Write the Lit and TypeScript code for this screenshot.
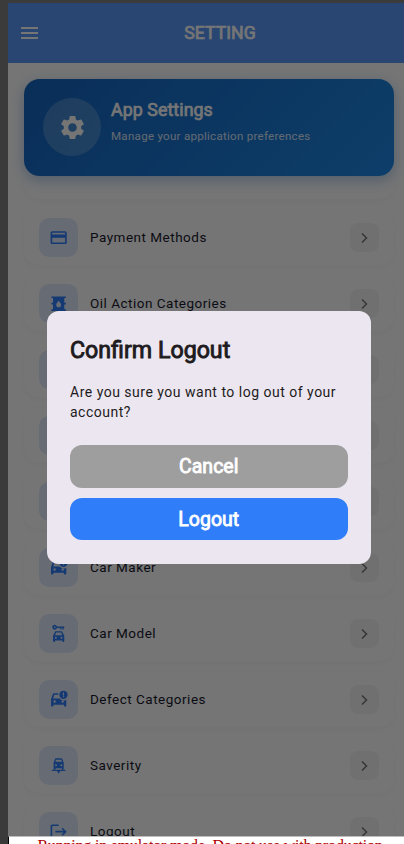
import { LitElement, html, css, svg } from "lit";
import { customElement } from "lit/decorators.js";

const icons: Record<string, unknown> = {
  card: svg`<path d="M20 4H4c-1.110 0-1.990.89-1.990 2L2 18c0 1.110.89 2 2 2h16c1.110 0 2-.89 2-2V6c0-1.110-.89-2-2-2zm0 14H4v-6h16v6zm0-10H4V6h16v2z"/>`,
  oil: svg`<path fill-rule="evenodd" d="M3 3h18v2h-2v6h2v2h-2v6h2v2H3v-2h2v-6H3v-2h2V5H3zM12 16.500c1.700 0 3-1.300 3-2.950C15 12 14.200 11 12 8.300 9.800 11 9 12 9 13.550c0 1.650 1.300 2.950 3 2.950z"/>`,
  alert: svg`<path fill-rule="evenodd" d="M11.500 4H6.200c-.7 0-1.200.4-1.400 1L2.500 11.500V19.500c0 .6.400 1 1 1h1c.6 0 1-.4 1-1V18.500h13v1c0 .6.400 1 1 1h1c.6 0 1-.4 1-1V12.100A6.500 6.500 0 0 1 13.200 10.500H5.300L6.600 6h4.900zM7 12.800a1.500 1.500 0 1 0 0 3 1.500 1.500 0 0 0 0-3zm10 0a1.500 1.500 0 1 0 0 3 1.500 1.500 0 0 0 0-3z"/><path fill-rule="evenodd" d="M18 .8a5.200 5.200 0 1 0 0 10.400A5.200 5.200 0 0 0 18 .8zM17.300 3h1.400v3.800h-1.400zm0 4.800h1.400v1.300h-1.400z"/>`,
  rental: svg`<path fill-rule="evenodd" d="M9.900 3A3 3 0 1 0 9.900 5H14v1.700h1.600V5h1v1.700h1.700V5H19V3zM7.200 3a1 1 0 1 1 0 2 1 1 0 0 1 0-2zM16.600 9.800c-.1-.5-.6-.8-1.100-.8h-7c-.5 0-1 .3-1.100.8L5 14.500v7c0 .5.400 1 1 1h.5c.6 0 1-.4 1-1v-1h9v1c0 .6.400 1 1 1h.5c.6 0 1-.4 1-1v-7zM8.800 10.500h6.400l1.100 3.500H7.700zM8.500 16a1.200 1.200 0 1 1 0 2.400 1.200 1.200 0 0 1 0-2.400zm7 0a1.200 1.200 0 1 1 0 2.400 1.200 1.200 0 0 1 0-2.400z"/>`,
  repair: svg`<path fill-rule="evenodd" d="M16.400 3.500c-.2-.5-.6-.8-1.200-.8H8.800c-.6 0-1 .3-1.200.8L5.700 8.200V16c0 .4.300.7.700.7h1.200c.4 0 .7-.3.7-.7v-.8h7.400v.8c0 .4.300.7.7.7h1.200c.4 0 .7-.3.7-.7V8.200zM8.800 4.800h6.400l.9 2.400H7.900zM8.700 10.200a1.200 1.200 0 1 1 0 2.400 1.200 1.200 0 0 1 0-2.400zm6.600 0a1.200 1.200 0 1 1 0 2.400 1.200 1.200 0 0 1 0-2.400zM3.600 17h16.800v1.700h-6.500L12 22l-1.900-3.300H3.600z"/>`,
  exit: svg`<path d="m17 7-1.410 1.410L18.170 11H8v2h10.170l-2.580 2.580L17 17l5-5zM2 5c0-1.100.9-2 2-2h8v2H4v14h8v2H4c-1.100 0-2-.9-2-2z"/>`,
};

const entries: { icon: string; label: string }[] = [
  { icon: "card", label: "Payment Methods" },
  { icon: "oil", label: "Oil Action Categories" },
  { icon: "", label: "" },
  { icon: "", label: "" },
  { icon: "", label: "" },
  { icon: "alert", label: "Car Maker" },
  { icon: "rental", label: "Car Model" },
  { icon: "alert", label: "Defect Categories" },
  { icon: "repair", label: "Saverity" },
  { icon: "exit", label: "Logout" },
];

@customElement("settings-row")
export class SettingsRow extends LitElement {
  static properties = { icon: {}, label: {} };
  declare icon: string;
  declare label: string;

  static styles = css`
    :host {
      display: flex;
      align-items: center;
      box-sizing: border-box;
      flex: none;
      height: 55px;
      padding: 0 15.500px;
      border-radius: 15px;
      background: #fff;
      box-shadow: 0 2px 8px rgba(0, 0, 0, 0.035);
    }
    .tile {
      display: grid;
      place-items: center;
      width: 39px;
      height: 39px;
      margin-right: 12px;
      border-radius: 10px;
      background: #e0e9fa;
    }
    .tile svg {
      width: 19.300px;
      height: 19.300px;
      fill: #2f7df8;
    }
    .label {
      flex: 1;
      padding-bottom: 2px;
      font-size: 13.500px;
      letter-spacing: 0.5px;
      color: #1a1a2e;
      white-space: nowrap;
    }
    .arrow {
      display: grid;
      place-items: center;
      width: 29px;
      height: 29px;
      border-radius: 8px;
      background: #f5f5f5;
    }
    .arrow svg {
      width: 14px;
      height: 14px;
      fill: none;
      stroke: #757575;
      stroke-width: 1.500;
    }
  `;

  render() {
    return html`
      <div class="tile"><svg viewBox="0 0 24 24">${icons[this.icon] ?? ""}</svg></div>
      <span class="label">${this.label}</span>
      <div class="arrow"><svg viewBox="0 0 14 14"><path d="M5 2.500 9.500 7 5 11.500" /></svg></div>
    `;
  }
}

@customElement("app-root")
export class AppRoot extends LitElement {
  static styles = css`
    :host {
      position: relative;
      display: flex;
      flex-direction: column;
      box-sizing: border-box;
      width: 404px;
      height: 844px;
      overflow: hidden;
      background: #3a3a3a;
      font-family: Roboto, "Liberation Sans", sans-serif;
    }
    .screen {
      display: flex;
      flex-direction: column;
      height: 836px;
      flex: none;
      box-sizing: border-box;
      border-top: 3px solid #808080;
      border-left: 8px solid #808080;
      background: #fff;
      overflow: hidden;
    }
    .bar {
      display: grid;
      grid-template-columns: 60px 1fr 32px;
      align-items: center;
      flex: none;
      height: 60px;
      background: #5a99fa;
      color: #fff;
    }
    .menu {
      display: grid;
      gap: 3px;
      width: 17.500px;
      margin-left: 12.500px;
    }
    .menu i {
      height: 2px;
      background: #fff;
    }
    .title {
      text-align: center;
      font-size: 17.700px;
      -webkit-text-stroke: 0.7px currentColor;
    }
    .hero {
      display: flex;
      align-items: center;
      flex: none;
      box-sizing: border-box;
      height: 96.500px;
      margin: 16px 10px 0 15.500px;
      padding: 0 19px 0 19.500px;
      border-radius: 15.500px;
      color: #fff;
      background: linear-gradient(135deg, #1565c0, #1e88e5);
      box-shadow: 0 4px 14px rgba(21, 101, 192, 0.35);
      z-index: 1;
    }
    .round {
      display: grid;
      place-items: center;
      width: 58px;
      height: 58px;
      margin-right: 10px;
      border-radius: 50%;
      background: rgba(255, 255, 255, 0.2);
    }
    .round svg {
      width: 29px;
      height: 29px;
      fill: #fff;
    }
    .hero b {
      display: block;
      font-size: 17.800px;
      font-weight: 400;
      -webkit-text-stroke: 0.7px currentColor;
      line-height: 22px;
      letter-spacing: 0.08px;
    }
    .hero small {
      display: block;
      font-size: 11.600px;
      line-height: 16px;
      margin-top: 7px;
      letter-spacing: 0.25px;
      color: rgba(255, 255, 255, 0.85);
    }
    .copy {
      padding-bottom: 11px;
    }
    .list {
      display: flex;
      flex-direction: column;
      gap: 11px;
      flex: 1;
      min-height: 0;
      padding: 0 10px 0 15.500px;
      overflow: hidden;
    }
    .stub {
      flex: none;
      height: 23.500px;
      border-radius: 0 0 15px 15px;
      box-shadow: 0 2px 8px rgba(0, 0, 0, 0.035);
    }
    .shade {
      position: absolute;
      inset: 0 0 8px;
      display: grid;
      background: rgba(0, 0, 0, 0.54);
      z-index: 2;
    }
    .dialog {
      box-sizing: border-box;
      width: 324px;
      height: 252.500px;
      margin: 311px 0 0 47px;
      padding: 25px 23.500px 0 23px;
      border-radius: 12px;
      background: #ece6f0;
      color: #1d1b20;
    }
    h2 {
      margin: 0;
      font-size: 23.200px;
      font-weight: 400;
      -webkit-text-stroke: 0.9px currentColor;
      line-height: 28px;
      white-space: nowrap;
    }
    p {
      margin: 18px 0 23px;
      font-size: 14px;
      line-height: 20px;
      letter-spacing: 0.5px;
    }
    button {
      display: block;
      width: 100%;
      height: 42.500px;
      margin: 0 0 10px;
      padding: 1px 0 0;
      border: 0;
      border-radius: 12px;
      background: #9e9e9e;
      color: #fff;
      font: 400 19.500px Roboto, sans-serif;
      -webkit-text-stroke: 0.8px currentColor;
    }
    .primary {
      background: #2f7df8;
    }
    .notice {
      box-sizing: border-box;
      flex: none;
      height: 24px;
      margin-left: 8px;
      padding-left: 7px;
      border-top: 1px solid #bdbdbd;
      border-left: 1px solid #000;
      background: #fff;
      color: #b00000;
      font: 16px/17px "Liberation Serif", serif;
      letter-spacing: -0.19px;
      text-align: center;
      white-space: nowrap;
    }
  `;

  render() {
    return html`
      <div class="screen">
        <header class="bar">
          <div class="menu"><i></i><i></i><i></i></div>
          <div class="title">SETTING</div>
        </header>
        <section class="hero">
          <div class="round">
            <svg viewBox="0 0 24 24"><path d="M19.140 12.940c.04-.3.060-.61.060-.94 0-.32-.02-.64-.07-.94l2.030-1.580c.18-.14.23-.41.12-.61l-1.920-3.320c-.12-.22-.37-.29-.59-.22l-2.390.96c-.5-.38-1.030-.7-1.620-.94l-.36-2.540c-.04-.24-.24-.41-.48-.41h-3.840c-.24 0-.43.17-.47.41l-.36 2.540c-.59.24-1.130.57-1.620.94l-2.390-.96c-.22-.08-.47 0-.59.22L2.740 8.870c-.12.21-.08.47.12.61l2.030 1.580c-.05.3-.09.63-.09.94s.02.64.07.94l-2.030 1.580c-.18.14-.23.41-.12.61l1.920 3.320c.12.22.37.29.59.22l2.390-.96c.5.38 1.030.7 1.620.94l.36 2.540c.05.24.24.41.48.41h3.840c.24 0 .44-.17.47-.41l.36-2.540c.59-.24 1.130-.56 1.620-.94l2.390.96c.22.08.47 0 .59-.22l1.920-3.320c.12-.22.070-.47-.12-.61l-2.010-1.580zM12 15.600c-1.980 0-3.600-1.620-3.600-3.600s1.620-3.600 3.600-3.600 3.600 1.620 3.600 3.600-1.620 3.600-3.600 3.600z" /></svg>
          </div>
          <div class="copy"><b>App Settings</b><small>Manage your application preferences</small></div>
        </section>
        <main class="list">
          <div class="stub"></div>
          ${entries.map((e) => html`<settings-row .icon=${e.icon} .label=${e.label}></settings-row>`)}
        </main>
      </div>
      <div class="notice">Running in emulator mode. Do not use with production</div>
      <div class="shade">
        <div class="dialog" role="dialog">
          <h2>Confirm Logout</h2>
          <p>Are you sure you want to log out of your account?</p>
          <button>Cancel</button>
          <button class="primary">Logout</button>
        </div>
      </div>
    `;
  }
}
